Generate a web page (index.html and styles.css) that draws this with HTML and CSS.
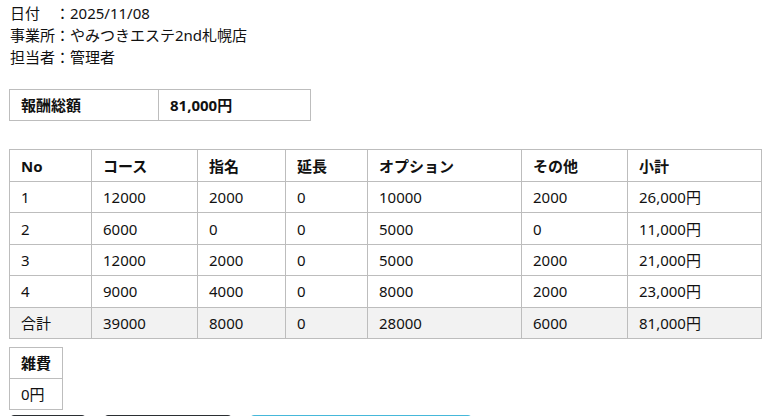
FILE: index.html
```html
<!DOCTYPE html>
<html lang="ja">
<head>
<meta charset="utf-8">
<link rel="stylesheet" href="styles.css">
</head>
<body>
<div class="page">
  <div class="info">
    <div class="line">日付　：2025/11/08</div>
    <div class="line">事業所：やみつきエステ2nd札幌店</div>
    <div class="line">担当者：管理者</div>
  </div>

  <table class="grid total">
    <colgroup><col class="c-label"><col class="c-value"></colgroup>
    <tr><th>報酬総額</th><th>81,000円</th></tr>
  </table>

  <table class="grid main">
    <colgroup>
      <col class="w1"><col class="w2"><col class="w3"><col class="w4"><col class="w5"><col class="w6"><col class="w7">
    </colgroup>
    <thead>
      <tr><th>No</th><th>コース</th><th>指名</th><th>延長</th><th>オプション</th><th>その他</th><th>小計</th></tr>
    </thead>
    <tbody>
      <tr><td>1</td><td>12000</td><td>2000</td><td>0</td><td>10000</td><td>2000</td><td>26,000円</td></tr>
      <tr><td>2</td><td>6000</td><td>0</td><td>0</td><td>5000</td><td>0</td><td>11,000円</td></tr>
      <tr><td>3</td><td>12000</td><td>2000</td><td>0</td><td>5000</td><td>2000</td><td>21,000円</td></tr>
      <tr><td>4</td><td>9000</td><td>4000</td><td>0</td><td>8000</td><td>2000</td><td>23,000円</td></tr>
      <tr class="sum"><td>合計</td><td>39000</td><td>8000</td><td>0</td><td>28000</td><td>6000</td><td>81,000円</td></tr>
    </tbody>
  </table>

  <table class="grid misc">
    <tr><th>雑費</th></tr>
    <tr><td>0円</td></tr>
  </table>

  <div class="buttons">
    <button class="btn dark b1" aria-label="戻る"></button>
    <button class="btn dark b2" aria-label="印刷する"></button>
    <button class="btn info-btn b3" aria-label="送信する"></button>
  </div>
</div>
</body>
</html>
```

FILE: styles.css
```css
html, body {
  margin: 0;
  padding: 0;
  background: #fff;
}
body {
  font-family: "Noto Sans", "Noto Sans CJK JP", sans-serif;
  font-size: 15px;
  color: #111;
}
.page {
  padding: 2px 0 0 9px;
}
.info .line {
  line-height: 22px;
  height: 22px;
  padding-left: 1px;
}
.grid {
  border-collapse: collapse;
  table-layout: fixed;
}
.grid th, .grid td {
  border: 1px solid #bdbdbd;
  text-align: left;
  padding: 5px 11px;
  line-height: 20px;
  height: 20px;
  white-space: nowrap;
}
.grid th {
  font-weight: bold;
}
.total {
  margin-top: 21px;
  width: 301px;
}
.total .c-label { width: 149px; }
.total .c-value { width: 152px; }

.main {
  margin-top: 28px;
  width: 752px;
}
.main th {
  height: 21px;
}
.main td {
  padding-top: 5px;
  padding-bottom: 5px;
  height: 20.4px;
}
.main .w1 { width: 82px; }
.main .w2 { width: 106px; }
.main .w3 { width: 88px; }
.main .w4 { width: 82px; }
.main .w5 { width: 154px; }
.main .w6 { width: 106px; }
.main .w7 { width: 134px; }
.main .sum td {
  background: #f2f2f2;
}

.misc {
  margin-top: 8px;
  width: 54px;
}

.buttons {
  display: flex;
  gap: 18px;
  margin-top: 5px;
  padding-left: 1px;
}
.btn {
  height: 36px;
  border-radius: 4px;
  border: 1px solid transparent;
  padding: 0;
}
.dark {
  background: #343a40;
  border-color: #2b2f33;
}
.info-btn {
  background: #5bc0de;
  border-color: #46b8da;
}
.b1 { width: 76px; }
.b2 { width: 128px; }
.b3 { width: 222px; }
```
